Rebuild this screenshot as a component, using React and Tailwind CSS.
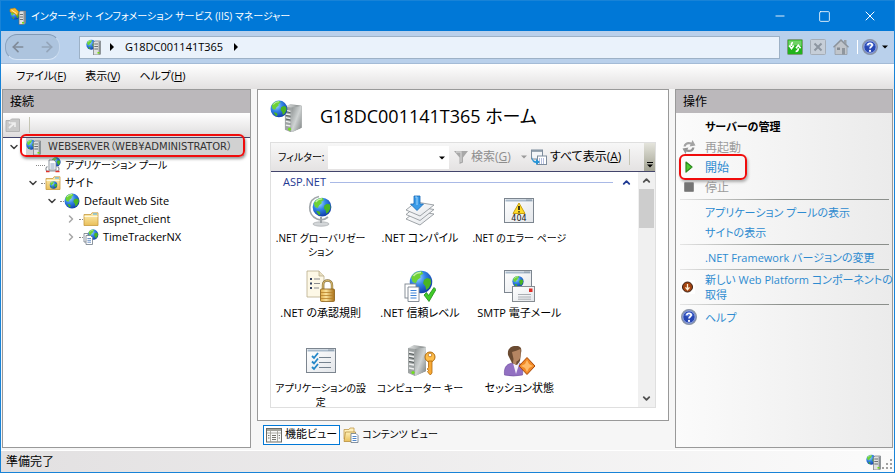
import React, { useState } from 'react';
import { Minus, Square, X, ArrowLeft, ArrowRight, ChevronDown, ChevronRight, ChevronUp } from 'lucide-react';

// Shared gradients, referenced by id from every icon
const IconDefs = () => (
  <svg className="absolute h-0 w-0" aria-hidden="true">
    <defs>
      <radialGradient id="sea" cx="35%" cy="30%" r="75%">
        <stop offset="0" stopColor="#a5dcff" />
        <stop offset="0.45" stopColor="#3384e6" />
        <stop offset="1" stopColor="#0f3aa6" />
      </radialGradient>
      <linearGradient id="steel" x1="0" x2="1" y1="0" y2="0">
        <stop offset="0" stopColor="#e4e6e6" />
        <stop offset="0.5" stopColor="#b3b7b7" />
        <stop offset="1" stopColor="#6d7272" />
      </linearGradient>
      <linearGradient id="steelFront" x1="0" x2="1" y1="0" y2="1">
        <stop offset="0" stopColor="#8b9090" />
        <stop offset="0.5" stopColor="#cfd3d3" />
        <stop offset="1" stopColor="#7a7f7f" />
      </linearGradient>
      <linearGradient id="manila" x1="0" x2="0" y1="0" y2="1">
        <stop offset="0" stopColor="#fff0b5" />
        <stop offset="1" stopColor="#e9bf5a" />
      </linearGradient>
      <linearGradient id="gold" x1="0" x2="1" y1="0" y2="0">
        <stop offset="0" stopColor="#e0ad4a" />
        <stop offset="0.4" stopColor="#fbe29a" />
        <stop offset="1" stopColor="#a86f16" />
      </linearGradient>
      <linearGradient id="paper" x1="0" x2="1" y1="0" y2="1">
        <stop offset="0" stopColor="#ffffff" />
        <stop offset="1" stopColor="#e3e6ea" />
      </linearGradient>
    </defs>
  </svg>
);

// Drawn on a 16 x 16 field
const GlobeShape = () => (
  <g>
    <circle cx="8" cy="8" r="7.5" fill="url(#sea)" />
    <path d="M1.5 5 C3 2 5 .9 8.5 .8 L9.5 2.5 7.5 3.5 7.8 5 5.8 6.5 4.5 8.8 2.4 8 Z" fill="#6dd235" />
    <path d="M10 6.5 L12 5.4 14.4 6 14.8 8.8 13.2 12 11.4 13.4 11 11 9.4 8.8 Z" fill="#49b522" />
    <path d="M3.4 11 L6 11.6 6.8 13 6 14.6 C4.8 14 4 12.8 3.4 11 Z" fill="#49b522" />
    <path d="M3 4 Q5 1.5 8 1.6" stroke="#e6fbd0" strokeWidth="1" fill="none" opacity="0.7" />
  </g>
);

// Drawn on a 20 x 32 field
const TowerShape = () => (
  <g>
    <path d="M1 4 L7 1 19 3 19 27 8 32 1 28 Z" fill="url(#steel)" />
    <path d="M1 4 L8 5 8 32 1 29 Z" fill="#9fa4a4" />
    <path d="M8 5 L19 3 19 27 8 32 Z" fill="url(#steelFront)" />
    <path d="M2 8 L7 9 M2 12 L7 13 M2 16 L7 17 M2 20 L7 21 M2 24 L7 25" stroke="#eef0f0" strokeWidth="1.4" />
    <path d="M2 9.5 L7 10.5 M2 13.5 L7 14.5 M2 17.5 L7 18.5" stroke="#555b5b" strokeWidth="1" />
    <circle cx="6" cy="28.5" r="1.6" fill="#70e01c" />
  </g>
);

const SmallServer = () => (
  <svg viewBox="0 0 16 16" className="h-4 w-4 shrink-0">
    <g transform="translate(0 0.5) scale(0.66)"><GlobeShape /></g>
    <path d="M7.5 3 L9 2 H14.5 V15 L13.5 16 H7.5 Z" fill="#dfe1e1" stroke="#70757a" strokeWidth="0.7" />
    <path d="M12.6 2.5 H14.5 V15 L12.6 16 Z" fill="#8a9096" />
    <path d="M8.3 5 H12 M8.3 7.5 H12 M8.3 10 H12" stroke="#5f656a" strokeWidth="0.9" />
    <rect x="11.5" y="13" width="2" height="1.6" fill="#74dd12" />
  </svg>
);

const AppIcon = () => (
  <svg viewBox="0 0 18 18" className="h-[18px] w-[18px] shrink-0">
    <g transform="translate(1 3) scale(0.62)"><GlobeShape /></g>
    <path d="M1 2 L6 1 10 5 8 9 5 6 1 5 Z" fill="#f4b92c" stroke="#b47a10" strokeWidth="0.6" />
    <path d="M2.5 3 L7.5 6.5" stroke="#fff0b0" strokeWidth="1" />
    <path d="M10 5 L11.5 4 H16.5 V16 L15 17.5 H10 Z" fill="#dfe1e1" stroke="#62676c" strokeWidth="0.7" />
    <path d="M14.5 4 H16.5 V16 L14.5 17.5 Z" fill="#8a9096" />
    <path d="M10.8 7.5 H14 M10.8 10 H14 M10.8 12.5 H14" stroke="#5f656a" strokeWidth="0.9" />
    <rect x="13" y="15" width="2" height="1.5" fill="#74dd12" />
  </svg>
);

const BigServer = () => (
  <svg viewBox="0 0 32 32" className="h-8 w-8 shrink-0">
    <g transform="translate(14 3) scale(0.92)"><TowerShape /></g>
    <g transform="translate(0 0) scale(1.12)"><GlobeShape /></g>
  </svg>
);

const GlobeIcon = () => (
  <svg viewBox="0 0 16 16" className="h-4 w-4 shrink-0"><GlobeShape /></svg>
);

const FolderIcon = ({ withGlobe }) => (
  <svg viewBox="0 0 16 16" className="h-4 w-4 shrink-0">
    <path d="M1 3.5 L8 3.5 9 1.8 H15 V14.5 H1 Z" fill="url(#manila)" stroke="#c79b3f" strokeWidth="0.8" />
    <path d="M10 3 H14" stroke="#3fa9ef" strokeWidth="1" />
    <path d="M1.5 5.5 H14.5" stroke="#fff8dc" strokeWidth="1" />
    {withGlobe && <g transform="translate(4.5 6) scale(0.5)"><GlobeShape /></g>}
  </svg>
);

const PoolIcon = () => (
  <svg viewBox="0 0 16 16" className="h-4 w-4 shrink-0">
    <g transform="translate(6 0) scale(0.62)"><GlobeShape /></g>
    <path d="M4 3 H9 L11 5.2 V13 H4 Z" fill="#fff" stroke="#6f7a85" strokeWidth="0.8" />
    <path d="M5.4 7 H9.6 M5.4 9 H9.6 M5.4 11 H9.6" stroke="#7a94b8" strokeWidth="0.9" />
    <path d="M2.5 9.5 C.5 10.5 .6 12.4 1.6 14 H13 C14.4 12.4 14.4 11 12.6 9.5" fill="none" stroke="#8d9299" strokeWidth="1.1" />
    <path d="M1 14.5 H4.5 M10.5 14.5 H14.5" stroke="#e0322a" strokeWidth="1.6" />
  </svg>
);

const SiteAppIcon = () => (
  <svg viewBox="0 0 16 16" className="h-4 w-4 shrink-0">
    <g transform="translate(4.5 0) scale(0.7)"><GlobeShape /></g>
    <path d="M1 4.5 H5 V13 H1 Z" fill="#fff" stroke="#6f7a85" strokeWidth="0.8" />
    <path d="M3 6.5 H7.5 L9.5 8.5 V15.5 H3 Z" fill="#fff" stroke="#6f7a85" strokeWidth="0.8" />
    <path d="M4.4 9.5 H8 M4.4 11.3 H8 M4.4 13.2 H8" stroke="#5a86c2" strokeWidth="0.9" />
  </svg>
);

const HelpIcon = () => (
  <svg viewBox="0 0 16 16" className="h-4 w-4 shrink-0">
    <circle cx="8" cy="8" r="7.4" fill="#2747b4" stroke="#8f98a5" strokeWidth="1.2" />
    <circle cx="8" cy="8" r="6.2" fill="none" stroke="#e2e9f7" strokeWidth="0.7" />
    <path d="M3.4 6.5 A5 5 0 0 1 12.6 6.5 Q8 8.5 3.4 6.5 Z" fill="#6f8fe6" opacity="0.7" />
    <path d="M5.8 6.2 C5.8 3.6 10.3 3.6 10.2 6.2 C10.1 7.8 8 7.8 8 9.6" fill="none" stroke="#fff" strokeWidth="1.7" />
    <circle cx="8" cy="11.9" r="1.1" fill="#fff" />
  </svg>
);

const RefreshIcon = () => (
  <svg viewBox="0 0 16 16" className="h-4 w-4">
    <rect x="0.5" y="0.5" width="15" height="15" rx="1" fill="#22b31c" stroke="#7d9a7d" />
    <path d="M1.5 1.5 H14.5 V7 Q8 5 1.5 8 Z" fill="#8bdc7f" opacity="0.75" />
    <path d="M6 3.5 Q4 3.8 4.4 7 M2.2 6.5 L4.5 9.6 6.8 6.5" fill="none" stroke="#fff" strokeWidth="1.6" />
    <path d="M8.6 12.5 Q11.4 12.4 11.3 9.2 M9 9.2 L11.3 6.2 13.6 9.2" fill="none" stroke="#fff" strokeWidth="1.6" />
  </svg>
);

const StopLoadIcon = () => (
  <svg viewBox="0 0 16 16" className="h-4 w-4">
    <rect x="0.5" y="0.5" width="15" height="15" rx="1" fill="#c6ced8" stroke="#a5adb7" />
    <path d="M4.5 4.5 L11.5 11.5 M11.5 4.5 L4.5 11.5" stroke="#8d96a1" strokeWidth="2" />
  </svg>
);

const HomeIcon = () => (
  <svg viewBox="0 0 16 16" className="h-4 w-4">
    <path d="M11 1 H13.5 V6 L11 3 Z" fill="#9aa1a8" />
    <path d="M2 7.5 L8 1.5 14 7.5 V15.5 H2 Z" fill="#c0c5cb" stroke="#959ca4" strokeWidth="0.8" />
    <path d="M0.5 8.3 L8 1 15.5 8.3" fill="none" stroke="#8b929a" strokeWidth="1.3" />
    <rect x="4" y="8.5" width="3" height="2.5" fill="#858c94" />
    <rect x="9" y="9" width="3" height="6.5" fill="#8f969e" />
  </svg>
);

const GlobeStandIcon = () => (
  <svg viewBox="0 0 32 32" className="h-8 w-8">
    <ellipse cx="16" cy="29" rx="8" ry="2.2" fill="#d3d6d8" stroke="#a3a7aa" strokeWidth="0.7" />
    <path d="M16 22 V28" stroke="#9ca1a5" strokeWidth="2" />
    <path d="M14 1.5 C2 4 2 20 12 24 Q18 26.5 23 22" fill="none" stroke="#a3a8ac" strokeWidth="1.7" />
    <g transform="translate(7 2) scale(1.25)"><GlobeShape /></g>
  </svg>
);

const CompileIcon = () => (
  <svg viewBox="0 0 32 32" className="h-8 w-8">
    {[9, 4.5, 0].map((y) => (
      <path key={y} d={`M2 ${15 + y} L12 ${7 + y} 30 ${10 + y} 16 ${21 + y} Z`} fill="url(#paper)" stroke="#888e93" strokeWidth="0.8" strokeLinejoin="round" />
    ))}
    <path d="M10 1 H16 V9 H19.5 L13 15.5 6.5 9 H10 Z" fill="#3a9be8" stroke="#1868b6" strokeWidth="0.8" />
    <path d="M11.2 2 H13 V10" stroke="#9dd3fb" strokeWidth="1" fill="none" />
  </svg>
);

const WindowFrame = ({ x, y, w, h }) => (
  <g>
    <rect x={x} y={y} width={w} height={h} fill="url(#paper)" stroke="#7c858f" />
    <path d={`M${x + 1} ${y + 2} H${x + w - 1}`} stroke="#a9bacb" strokeWidth="2" />
    <path d={`M${x + w - 7} ${y + 1.5} H${x + w - 1}`} stroke="#5d6b79" strokeWidth="1" strokeDasharray="1 1" />
  </g>
);

const ErrorPageIcon = () => (
  <svg viewBox="0 0 32 32" className="h-8 w-8">
    <WindowFrame x={1.5} y={3.5} w={29} h={24} />
    <path d="M16 8 L22 18.5 H10 Z" fill="#ffdc2b" stroke="#c79f12" strokeWidth="1" strokeLinejoin="round" />
    <path d="M16 11 V15 M16 16.2 V17.5" stroke="#111" strokeWidth="1.6" />
    <text x="16" y="26" textAnchor="middle" fontSize="8" fontFamily="DejaVu Sans, sans-serif" fill="#222">404</text>
  </svg>
);

const LockRulesIcon = () => (
  <svg viewBox="0 0 32 32" className="h-8 w-8">
    <path d="M2 1 H14 L19 6 V27 H2 Z" fill="#fdf8e6" stroke="#b9ac8a" strokeWidth="0.8" />
    <path d="M14 1 V6 H19" fill="#e9dfc2" stroke="#b9ac8a" strokeWidth="0.8" />
    <path d="M5 9 H7 M5 13.5 H7 M5 18 H7" stroke="#33405f" strokeWidth="2" />
    <path d="M9 9 H15 M9 13.5 H15 M9 18 H14" stroke="#8d8d8d" strokeWidth="1" />
    <path d="M18 20 V15 C18 9 27 9 27 15 V20" fill="none" stroke="#8f7a48" strokeWidth="2.4" />
    <path d="M18 20 V15 C18 9 27 9 27 15 V20" fill="none" stroke="#e3c06a" strokeWidth="1" />
    <rect x="15.5" y="19" width="14" height="12.5" rx="1" fill="url(#gold)" stroke="#8b5f17" strokeWidth="0.8" />
    <path d="M16 22.5 H29 M16 25.5 H29 M16 28.5 H29" stroke="#b98128" strokeWidth="0.8" />
  </svg>
);

const TrustIcon = () => (
  <svg viewBox="0 0 32 32" className="h-8 w-8">
    <g transform="translate(5 0) scale(1.5)"><GlobeShape /></g>
    <rect x="1" y="14" width="11" height="14" fill="#fff" stroke="#7c858f" strokeWidth="0.9" />
    <path d="M4 17 H15 V31.5 H4 Z" fill="#fff" stroke="#7c858f" strokeWidth="0.9" />
    <path d="M6.5 20.5 H12.5 M6.5 23 H12.5 M6.5 25.5 H12.5 M6.5 28 H12.5" stroke="#3f83d6" strokeWidth="1.2" />
    <path d="M20 25 L22.5 22.5 24.5 25.5 30 17.5 32 19.5 25 31.5 Z" fill="#41cb28" stroke="#1d8a16" strokeWidth="0.8" />
  </svg>
);

const SmtpIcon = () => (
  <svg viewBox="0 0 32 32" className="h-8 w-8">
    <WindowFrame x={1.5} y={0.5} w={27} h={22} />
    <g transform="translate(9 5.5) scale(0.75)"><GlobeShape /></g>
    <rect x="9.5" y="16.5" width="22" height="15" fill="url(#paper)" stroke="#868c92" />
    <path d="M15 24.5 H28 M15 27 H28 M15 29.2 H28" stroke="#a1a6ab" strokeWidth="0.9" />
    <rect x="26" y="18.5" width="3.5" height="3.5" fill="#df2d27" />
  </svg>
);

const AppSettingsIcon = () => (
  <svg viewBox="0 0 32 32" className="h-8 w-8">
    <WindowFrame x={1.5} y={3.5} w={29} h={24} />
    <path d="M14 12.5 H26 M14 17.5 H26 M14 22.5 H26" stroke="#75828f" strokeWidth="1.2" />
    <path d="M7 11 L9 13 13 8 M7 16.5 L9 18.5 13 13.5 M7 22 L9 24 13 19" fill="none" stroke="#2487c8" strokeWidth="1.8" />
  </svg>
);

const MachineKeyIcon = () => (
  <svg viewBox="0 0 32 32" className="h-8 w-8">
    <g transform="translate(3 -1)"><TowerShape /></g>
    <circle cx="26" cy="12" r="5" fill="#ffbe4a" stroke="#b06a0e" strokeWidth="1" />
    <circle cx="26" cy="10" r="1.8" fill="#fff" stroke="#b06a0e" strokeWidth="0.7" />
    <path d="M24.5 16 H28 V28 L26.3 30 24.5 28 23.5 26.5 24.5 25.5 23.2 24 24.5 22.5 Z" fill="#f8a935" stroke="#b06a0e" strokeWidth="0.8" />
  </svg>
);

const SessionIcon = () => (
  <svg viewBox="0 0 32 32" className="h-8 w-8">
    <path d="M1.5 30 C.5 21 5 18.5 10 18 L16 18 C20 19 20 26 19.5 30 Q10 32 1.5 30 Z" fill="#9270c2" stroke="#6b4a9c" strokeWidth="0.6" />
    <path d="M10 18 L13 29 16.5 18 Z" fill="#f4f0fa" />
    <path d="M5 10 C4 3 9 .5 13.5 1 C18 1 19 4 18 8 L17 16 14 20 9 18 Z" fill="#6b4b32" />
    <path d="M9 7 Q13 6 17.5 4 L17.6 10 C17.4 14 15.5 16 13.5 16.5 L13 20 10 18 10.5 14 Z" fill="#b58562" />
    <path d="M24 12.5 L32 21 24 29.5 16 21 Z" fill="#f18925" stroke="#a7480a" strokeWidth="1" />
    <path d="M24 15 L26 19 30 21 26 23 24 27 22 23 18 21 22 19 Z" fill="#ffba68" />
  </svg>
);

const FunnelIcon = () => (
  <svg viewBox="0 0 16 16" className="h-4 w-4 shrink-0">
    <path d="M1 2 H15 L10 8.5 V13.5 L6.5 15 V8.5 Z" fill="#a8a8a8" />
    <path d="M3 3 H8 L8 13" stroke="#cfcfcf" strokeWidth="1.3" fill="none" />
  </svg>
);

const ShowAllIcon = () => (
  <svg viewBox="0 0 16 16" className="h-4 w-4 shrink-0">
    <rect x="0.5" y="1" width="11" height="9" fill="#f4f6f8" stroke="#7d8c9c" />
    <path d="M1 2 H11" stroke="#7d8c9c" strokeWidth="1.5" />
    <rect x="6.5" y="7" width="9" height="8.5" fill="#fff" stroke="#7d8c9c" />
    <path d="M8 10 H14 M8 12 H14 M8 14 H14" stroke="#6b7cbb" strokeWidth="1" strokeDasharray="1 1" />
    <path d="M1 7 Q1 12 5 12.2 V10 L9 13 5 16 V14 Q0 13.5 1 7 Z" fill="#2493d6" />
  </svg>
);

const FeaturesTabIcon = () => (
  <svg viewBox="0 0 16 16" className="h-4 w-4 shrink-0">
    <rect x="0.5" y="1.5" width="15" height="13.5" fill="#f8f8f6" stroke="#6c6c66" />
    <path d="M1 3 H15" stroke="#8c8c84" strokeWidth="1.6" />
    <path d="M4.5 4 V15 M11.5 4 V15 M1 6 H15" stroke="#9a9a92" strokeWidth="0.8" />
    <path d="M6 8.5 H10 M6 10.5 H10 M6 12.5 H10 M2 8.5 H3.5 M2 11 H3.5 M12.7 8.5 H14 M12.7 11 H14" stroke="#66665f" strokeWidth="0.9" />
  </svg>
);

const ContentTabIcon = () => (
  <svg viewBox="0 0 16 16" className="h-4 w-4 shrink-0">
    <path d="M1 2.5 H6 L7 1 H11 V12 H1 Z" fill="#fff0bb" stroke="#c19a4b" strokeWidth="0.8" />
    <path d="M2.5 5 H12.5 V14.5 H1 Z" fill="url(#manila)" stroke="#b98f3d" strokeWidth="0.8" />
    <path d="M8 6.5 H13 L15 8.5 V15.5 H8 Z" fill="#fff" stroke="#68788a" strokeWidth="0.8" />
    <path d="M9.5 9.5 H13.5 M9.5 11.5 H13.5 M9.5 13.5 H13.5" stroke="#3b78c4" strokeWidth="0.9" />
  </svg>
);

const RestartIcon = () => (
  <svg viewBox="0 0 16 16" className="h-4 w-4">
    <path d="M2.5 7.5 C3 3.5 7 2 10.5 3.5 L11.5 1 14.5 6.5 8.5 7.5 9.6 5.5 C7 4.6 5.4 5.4 4.8 7.5 Z" fill="#a3a3a3" />
    <path d="M13.5 8.5 C13 12.5 9 14 5.5 12.5 L4.5 15 1.5 9.5 7.5 8.5 6.4 10.5 C9 11.4 10.6 10.6 11.2 8.5 Z" fill="#949494" />
  </svg>
);

const StartIcon = () => (
  <svg viewBox="0 0 16 16" className="h-4 w-4">
    <path d="M5 3 L11 8 5 13 Z" fill="#4fcc32" stroke="#2a8a1d" strokeWidth="1.2" strokeLinejoin="round" />
  </svg>
);

const StopIcon = () => (
  <svg viewBox="0 0 16 16" className="h-4 w-4">
    <rect x="3.5" y="3.5" width="9" height="9" rx="0.5" fill="#747474" stroke="#8e8e8e" />
  </svg>
);

const PlatformIcon = () => (
  <svg viewBox="0 0 16 16" className="h-4 w-4">
    <rect x="1" y="1" width="13" height="14" fill="#fff" />
    <circle cx="6.5" cy="8" r="5" fill="#a4440f" stroke="#3c2014" strokeWidth="1" />
    <path d="M6.5 5 V10.5 M4.5 8.3 L6.5 10.8 8.5 8.3" fill="none" stroke="#fff0d8" strokeWidth="1.3" />
  </svg>
);

const ConnectIcon = () => (
  <svg viewBox="0 0 16 16" className="h-4 w-4">
    <path d="M1 3.5 H5 L6.5 2 H14.5 V14.5 H1 Z" fill="#c9c9c9" stroke="#b4b4b4" />
    <path d="M4 11 L9 6.5 M6 6 H10 V10 M4 5 L5.5 6.5" fill="none" stroke="#eeeeee" strokeWidth="1.7" />
  </svg>
);

const Caret = ({ className }) => (
  <svg viewBox="0 0 6 4" className={`h-1 w-1.5 ${className}`}><path d="M0 0.5 H6 L3 3.5 Z" fill="currentColor" /></svg>
);

const CrumbArrow = () => (
  <svg viewBox="0 0 4 8" className="h-2 w-1"><path d="M0 0 L4 4 0 8 Z" fill="#000" /></svg>
);

const MENUS = [
  { label: 'ファイル', accessKey: 'F' },
  { label: '表示', accessKey: 'V' },
  { label: 'ヘルプ', accessKey: 'H' },
];

const TREE = [
  { label: 'アプリケーション プール', indent: 'pl-[24px]', icon: PoolIcon, small: true },
  { label: 'サイト', indent: 'pl-[24px]', icon: () => <FolderIcon withGlobe />, open: true },
  { label: 'Default Web Site', indent: 'pl-[43px]', icon: GlobeIcon, open: true },
  { label: 'aspnet_client', indent: 'pl-[62px]', icon: FolderIcon, open: false },
  { label: 'TimeTrackerNX', indent: 'pl-[62px]', icon: SiteAppIcon, open: false },
];

// Long katakana labels are set one size smaller so that they stay inside their cell
const FEATURES = [
  { lines: ['.NET グローバリゼー', 'ション'], icon: GlobeStandIcon, small: true },
  { lines: ['.NET コンパイル'], icon: CompileIcon },
  { lines: ['.NET のエラー ページ'], icon: ErrorPageIcon, small: true },
  { lines: ['.NET の承認規則'], icon: LockRulesIcon },
  { lines: ['.NET 信頼レベル'], icon: TrustIcon },
  { lines: ['SMTP 電子メール'], icon: SmtpIcon },
  { lines: ['アプリケーションの設', '定'], icon: AppSettingsIcon, small: true },
  { lines: ['コンピューター キー'], icon: MachineKeyIcon, small: true },
  { lines: ['セッション状態'], icon: SessionIcon },
];

const TitleBar = () => (
  <header className="flex h-[30px] shrink-0 items-center bg-[#0078d7] pr-0.5 pl-2 text-white">
    <AppIcon />
    <h1 className="flex-1 pl-1 text-[10px]">インターネット インフォメーション サービス (IIS) マネージャー</h1>
    <button aria-label="最小化" className="flex w-[45px] justify-center"><Minus size={14} strokeWidth={1.5} /></button>
    <button aria-label="最大化" className="flex w-[45px] justify-center"><Square size={13} strokeWidth={1.5} /></button>
    <button aria-label="閉じる" className="flex w-[45px] justify-center"><X size={16} strokeWidth={1.5} /></button>
  </header>
);

const AddressBar = () => (
  <nav className="flex h-[33px] shrink-0 items-center border-b border-[#a4bbd6] bg-[#b9d0eb] pr-1.5">
    <div className="ml-1 flex h-[26px] w-[55px] items-center justify-between rounded-xl border border-t-[#8199b5] border-r-[#c6d8ed] border-b-[#d8e6f6] border-l-[#8da5c1] bg-[#adc4de] px-1 text-[#808b99]">
      <button aria-label="戻る"><ArrowLeft size={16} strokeWidth={2.5} /></button>
      <button aria-label="進む" className="text-[#94a5b9]"><ArrowRight size={16} strokeWidth={2.5} /></button>
    </div>
    <div className="ml-[19px] flex h-[23px] flex-1 items-center border border-[#9db1c6] bg-[#eaf2fb] pl-1.5">
      <SmallServer />
      <span className="w-2" />
      <CrumbArrow />
      <a href="#server" className="px-[11px]">G18DC001141T365</a>
      <CrumbArrow />
    </div>
    <div className="ml-[7px] flex items-center gap-[7px]">
      <button aria-label="最新の情報に更新"><RefreshIcon /></button>
      <button aria-label="中止" disabled><StopLoadIcon /></button>
      <button aria-label="ホーム" disabled><HomeIcon /></button>
    </div>
    <span className="mr-1 ml-2 h-3.5 w-px bg-white" />
    <button aria-label="ヘルプ" className="flex items-center gap-1">
      <HelpIcon />
      <Caret className="text-black" />
    </button>
  </nav>
);

const MenuBar = () => (
  <div role="menubar" className="flex h-[25px] shrink-0 items-center gap-[19px] bg-gradient-to-b from-white to-[#e2e0e0] pl-[15px]">
    {MENUS.map((menu) => (
      <button key={menu.accessKey} role="menuitem">
        {menu.label}(<u>{menu.accessKey}</u>)
      </button>
    ))}
  </div>
);

const PanelTitle = ({ children }) => (
  <h2 className="flex h-[23px] shrink-0 items-center bg-[#bbb8bb] pl-[7px] text-[12px]">{children}</h2>
);

const Connections = () => (
  <aside className="flex w-[249px] shrink-0 flex-col border border-[#999] bg-white">
    <PanelTitle>接続</PanelTitle>
    <div className="flex h-[25px] shrink-0 items-center border-b border-[#43456b] bg-gradient-to-b from-white to-[#dedcdd] pl-0.5">
      <button aria-label="接続" disabled><ConnectIcon /></button>
      <span className="ml-2 h-4 w-px bg-[#c5c5b4]" />
    </div>
    <ul role="tree" className="leading-[18px]">
      <li role="treeitem" aria-selected="true" className="relative flex h-[18px] items-center pl-[5px]">
        <button aria-label="折りたたむ"><ChevronDown size={12} strokeWidth={3} className="text-[#404040]" /></button>
        <span className="w-[6px]" />
        <span className="mr-1.5 flex flex-1 items-center gap-1.5 bg-[#d1d1d1] text-[10px] text-[#333]">
          <SmallServer />
          <span className="font-['DejaVu_Sans','Noto_Sans_CJK_JP',sans-serif]">WEBSERVER（WEB¥ADMINISTRATOR）</span>
        </span>
        <span className="pointer-events-none absolute -top-1 left-[17px] h-[23px] w-[225px] rounded-md border-2 border-[#f00c0c] shadow-[1px_2px_3px_rgba(0,0,0,0.4)]" />
      </li>
      {TREE.map(({ label, indent, icon: Icon, open, small }) => (
        <li key={label} role="treeitem" className={`flex h-[18px] items-center ${indent}`}>
          {open === undefined ? (
            <span className="ml-[9px] w-[9px] border-t border-dotted border-[#888]" />
          ) : (
            <>
              <button aria-label={open ? '折りたたむ' : '展開'}>
                {open
                  ? <ChevronDown size={12} strokeWidth={3} className="text-[#404040]" />
                  : <ChevronRight size={12} strokeWidth={3} className="text-[#a6a6a6]" />}
              </button>
              <span className="ml-0.5 w-1 border-t border-dotted border-[#888]" />
            </>
          )}
          <Icon />
          <span className={small ? 'pl-1 text-[10px]' : 'pl-1'}>{label}</span>
        </li>
      ))}
    </ul>
  </aside>
);

const FilterBar = ({ filter, setFilter }) => (
  <div className="flex h-[29px] shrink-0 items-center border-b border-[#43456b] bg-gradient-to-b from-[#f7f7f7] to-[#e4e2e2] pl-[7px]">
    <label htmlFor="filter" className="w-[50px] text-[10px] whitespace-nowrap">フィルター:</label>
    <div className="relative">
      <select
        id="filter"
        value={filter}
        onChange={(e) => setFilter(e.target.value)}
        className="block h-[23px] w-[121px] appearance-none bg-white"
      >
        <option value=""></option>
      </select>
      <Caret className="pointer-events-none absolute top-[10px] right-1 text-black" />
    </div>
    <button disabled className="flex items-center gap-0.5 pl-1 text-[12px] whitespace-nowrap text-[#8d8d8d]">
      <FunnelIcon />
      <span>検索(<u>G</u>)</span>
      <Caret className="ml-2 text-[#9a9a9a]" />
    </button>
    <button className="flex items-center gap-[3px] pl-1 text-[12px] whitespace-nowrap">
      <ShowAllIcon />
      <span>すべて表示(<u>A</u>)</span>
    </button>
    <span className="ml-2 h-4 w-px bg-[#c5c5b4]" />
    <button aria-label="ツール バー オプション" className="ml-auto flex h-full w-[11px] flex-col items-center justify-end gap-px bg-gradient-to-b from-[#e4e4dc] to-[#a3a393] pb-[3px]">
      <span className="h-px w-1.5 bg-black" />
      <Caret className="text-black" />
    </button>
  </div>
);

const HomePane = () => {
  const [filter, setFilter] = useState('');

  return (
    <main className="flex min-w-0 flex-1 flex-col">
      <section className="flex min-h-0 flex-1 flex-col border border-[#999] bg-white px-3 pb-3">
        <div className="flex h-[52px] shrink-0 items-center gap-[18px]">
          <BigServer />
          <h2 className="text-[18px]">G18DC001141T365 ホーム</h2>
        </div>
        <div className="flex min-h-0 flex-1 flex-col border border-[#dfdfdf]">
          <FilterBar filter={filter} setFilter={setFilter} />
          <div className="flex min-h-0 flex-1">
            <div className="min-w-0 flex-1 overflow-hidden">
              <div className="flex h-5 items-center gap-1 pr-1.5 pl-3 text-[#1f3a93]">
                <h3>ASP.NET</h3>
                <span className="h-px flex-1 bg-[#a9b9e6]" />
                <button aria-label="グループを閉じる" className="pl-1"><ChevronUp size={11} strokeWidth={4} /></button>
              </div>
              <ul className="grid w-[298px] grid-cols-3">
                {FEATURES.map(({ lines, icon: Icon, small }) => (
                  <li key={lines[0]} className="flex h-[75px] flex-col items-center pt-[3px] text-center leading-[14px] whitespace-nowrap">
                    <Icon />
                    <span className={small ? 'pt-1 text-[10px]' : 'pt-1'}>
                      {lines.map((line) => <span key={line} className="block">{line}</span>)}
                    </span>
                  </li>
                ))}
              </ul>
            </div>
            <div className="flex w-[17px] shrink-0 flex-col items-center bg-[#f0f0f0] text-[#505050]">
              <button aria-label="上へ" className="flex h-[17px] items-center"><ChevronUp size={11} strokeWidth={4} /></button>
              <span className="h-[39px] w-[15px] bg-[#cdcdcd]" />
              <button aria-label="下へ" className="mt-auto flex h-[17px] items-center"><ChevronDown size={11} strokeWidth={4} /></button>
            </div>
          </div>
        </div>
      </section>
      <div className="flex h-[27px] shrink-0 items-center gap-[3px] pl-1.5">
        <button className="flex h-5 items-center gap-[3px] border border-[#0078d7] bg-white px-0.5"><FeaturesTabIcon />機能ビュー</button>
        <button className="flex h-5 items-center gap-[3px]"><ContentTabIcon /><span className="text-[10px]">コンテンツ ビュー</span></button>
      </div>
    </main>
  );
};

const Action = ({ icon: Icon, disabled, framed, children }) => (
  <li className="relative grid min-h-5 grid-cols-[25px_1fr] items-center leading-[15px] whitespace-nowrap">
    <span className="pl-px">{Icon && <Icon />}</span>
    {disabled
      ? <button disabled className="text-left text-[12px] text-[#9b9b9b]">{children}</button>
      : <a href="#action" className={framed ? 'text-[12px] text-[#2e8bd0]' : 'text-[#2e8bd0]'}>{children}</a>}
    {framed && (
      <span className="pointer-events-none absolute -top-[3px] -left-px h-[26px] w-[68px] rounded-md border-2 border-[#f00c0c] shadow-[1px_2px_3px_rgba(0,0,0,0.3)]" />
    )}
  </li>
);

const Divider = () => (
  <li role="separator" className="py-0.5">
    <span className="block h-px bg-gradient-to-r from-[#e5e5e5] via-[#8b8f8b] to-[#8b8f8b]" />
  </li>
);

const Actions = () => (
  <aside className="flex w-[218px] shrink-0 flex-col border border-[#999] bg-gradient-to-r from-[#fbfbfb] to-[#ebebeb]">
    <PanelTitle>操作</PanelTitle>
    <ul className="py-1 pr-[3px] pl-1">
      <li className="flex h-5 items-center pl-[25px]"><h3 className="font-bold">サーバーの管理</h3></li>
      <Action icon={RestartIcon} disabled>再起動</Action>
      <Action icon={StartIcon} framed>開始</Action>
      <Action icon={StopIcon} disabled>停止</Action>
      <Divider />
      <Action>アプリケーション プールの表示</Action>
      <Action>サイトの表示</Action>
      <Divider />
      <Action>.NET Framework バージョンの変更</Action>
      <Divider />
      <Action icon={PlatformIcon}>新しい Web Platform コンポーネントの<br />取得</Action>
      <Divider />
      <Action icon={HelpIcon}>ヘルプ</Action>
    </ul>
  </aside>
);

const StatusBar = () => (
  <footer className="flex h-[22px] shrink-0 items-center justify-between border-t border-white bg-gradient-to-r from-[#e2e0e1] to-[#fbfbfb] pl-[5px] text-[12px]">
    <span>準備完了</span>
    <span className="flex items-end">
      <SmallServer />
      <svg viewBox="0 0 12 12" className="h-3 w-3" fill="#a0a0a0">
        <path d="M8 1 h2 v2 h-2 Z M8 5 h2 v2 h-2 Z M8 9 h2 v2 h-2 Z M4 5 h2 v2 h-2 Z M4 9 h2 v2 h-2 Z M0 9 h2 v2 h-2 Z" />
      </svg>
    </span>
  </footer>
);

const App = () => (
  <div className="flex h-screen flex-col border border-[#1883d7] bg-[#f6f6f6] font-['Open_Sans','Noto_Sans_CJK_JP',sans-serif] text-[11px] text-black [font-feature-settings:'palt']">
    <IconDefs />
    <TitleBar />
    <AddressBar />
    <MenuBar />
    <div className="flex min-h-0 flex-1 gap-[6px] px-px pb-0.5">
      <Connections />
      <HomePane />
      <Actions />
    </div>
    <StatusBar />
  </div>
);

export default App;
